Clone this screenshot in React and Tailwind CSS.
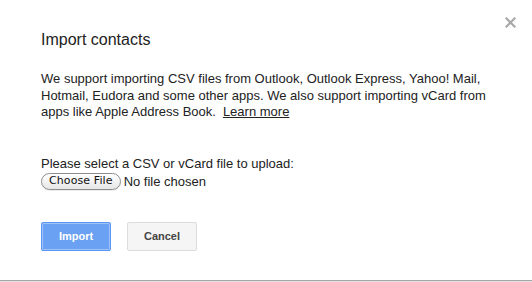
export default function App() {
  return (
    <div className="relative w-[532px] h-[282px] bg-white overflow-hidden" style={{ fontFamily: '"Liberation Sans", Arial, sans-serif' }}>
      <button className="absolute left-[503px] top-[15px] w-[14px] h-[14px] flex items-center justify-center">
        <svg width="11" height="11" viewBox="0 0 11 11">
          <path d="M1.5 1.5 L9.5 9.5 M9.5 1.5 L1.5 9.5" stroke="#a8a8a8" strokeWidth="2.2" strokeLinecap="square" />
        </svg>
      </button>
      <div className="flex flex-col pl-[41px] pr-[41px] pt-[30px] h-[280px]">
        <h1 className="text-[16px] leading-[20px] text-[#222] font-normal">Import contacts</h1>
        <p className="mt-[21px] text-[13px] leading-[16.7px] text-[#222]">
          <span>We support importing CSV files from Outlook, Outlook Express, Yahoo! Mail, Hotmail, Eudora and some other apps. We also support importing vCard from apps like Apple Address Book.</span>
          <a className="inline-block ml-[7px] underline text-[#222] leading-[15px]">Learn more</a>
        </p>
        <div className="mt-[34px] text-[13px] leading-[17px] text-[#222]">Please select a CSV or vCard file to upload:</div>
        <div className="flex items-center mt-[1px] h-[17px]">
          <span
            className="h-[17px] px-[7px] flex items-center rounded-[9px] border border-[#8e8e8e] bg-gradient-to-b from-white to-[#e6e6e6] text-[11px] text-[#111] shadow-[0_1px_0_rgba(0,0,0,0.08)]"
            style={{ fontFamily: '"DejaVu Sans", "Liberation Sans", sans-serif', letterSpacing: '0.1px' }}
          >
            Choose File
          </span>
          <span className="ml-[3px] text-[13px] text-[#222]">No file chosen</span>
        </div>
        <div className="flex mt-[32px] gap-[16px]">
          <button className="w-[70px] h-[29px] rounded-[2px] border border-[#5b96f4] bg-[#6aa1f2] text-white text-[11px] font-bold flex items-center justify-center shadow-[inset_0_0_0_1px_rgba(255,255,255,0.35)]">
            Import
          </button>
          <button className="w-[70px] h-[29px] rounded-[2px] border border-[#dcdcdc] bg-[#f5f5f5] text-[#444] text-[11px] font-bold flex items-center justify-center">
            Cancel
          </button>
        </div>
      </div>
      <div className="h-[1px] bg-[#a6a6a6]"></div>
      <div className="h-[1px] bg-[#e2e2e2]"></div>
    </div>
  );
}
